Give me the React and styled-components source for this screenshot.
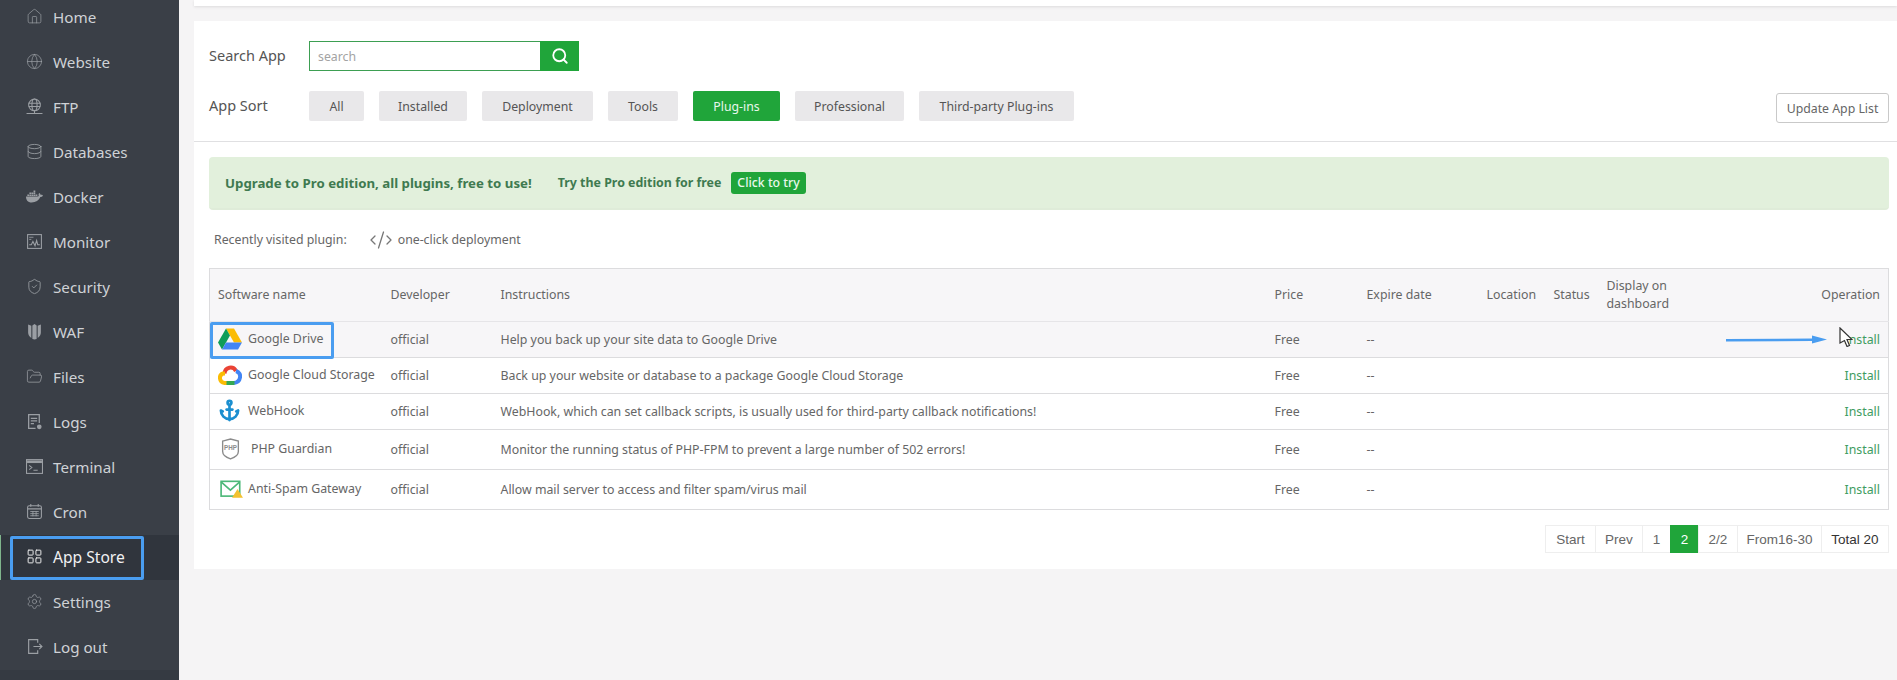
import React from "react";
import styled, { createGlobalStyle } from "styled-components";
import {
  House, Globe, Database, ShieldCheck, FolderOpen, LayoutGrid, Settings, Search, CodeXml, Anchor,
} from "lucide-react";
import { FaDocker } from "react-icons/fa";

const GlobalStyle = createGlobalStyle`
  html, body {
    margin: 0;
    height: 680px;
    overflow: hidden;
    background: #f5f4f5;
    font-family: "Noto Sans", "Open Sans", sans-serif;
  }
  * { box-sizing: border-box; }
`;

const Page = styled.div`
  display: flex;
  width: 1897px;
  height: 680px;
  overflow: hidden;
`;

const Sidebar = styled.nav`
  width: 179px;
  flex: none;
  background: #353a42;
`;

const MenuList = styled.div`
  margin-top: -5px;
  background: #3a3f47;
`;

const MenuItem = styled.div`
  position: relative;
  display: flex;
  align-items: center;
  height: 45px;
  padding: 0 0 2px ${(p) => (p.$active ? 25 : 26)}px;
  gap: 10px;
  font-size: ${(p) => (p.$active ? 15.6 : 15.2)}px;
  color: ${(p) => (p.$active ? "#f0f1f3" : "#cfd2d6")};
  background: ${(p) => (p.$active ? "#30353d" : "transparent")};
  border-left: ${(p) => (p.$active ? "1px solid #7fb48c" : "none")};
  svg {
    width: 17px;
    height: 17px;
    flex: none;
    color: ${(p) => (p.$active ? "#eceded" : "#9b9fa4")};
  }
`;

const HighlightBox = styled.span`
  position: absolute;
  border: 3px solid #4a9df0;
  border-radius: 2px;
  pointer-events: none;
  ${(p) => p.$menu && "left: 9px; top: 1px; width: 134px; height: 44px;"}
  ${(p) => p.$cell && "left: 0; top: 0; width: 124px; height: 37px;"}
`;

const Main = styled.main`
  flex: 1;
  padding-left: 15px;
`;

const TopStrip = styled.div`
  height: 6px;
  background: #fff;
  box-shadow: 0 1px 3px rgba(0, 0, 0, 0.1);
`;

const Panel = styled.section`
  margin-top: 15px;
  background: #fff;
  padding-bottom: 16px;
`;

const FilterArea = styled.div`
  display: flex;
  flex-direction: column;
  gap: 20px;
  padding: 20px 8px 20px 15px;
  border-bottom: 1px solid #e0e0e2;
`;

const FilterRow = styled.div`
  display: flex;
  align-items: center;
  height: 30px;
`;

const FilterLabel = styled.span`
  width: 100px;
  flex: none;
  margin-top: -2px;
  font-size: 14.5px;
  color: #555;
`;

const SearchInput = styled.div`
  width: 231px;
  height: 30px;
  border: 1px solid #3d9f52;
  border-right: none;
  padding-left: 8px;
  display: flex;
  align-items: center;
  font-size: 12.3px;
  color: #a3a3a3;
`;

const SearchButton = styled.div`
  width: 39px;
  height: 30px;
  background: #20a53a;
  display: flex;
  align-items: center;
  justify-content: center;
  color: #fff;
`;

const SortList = styled.div`
  display: flex;
  gap: 15px;
`;

const SortButton = styled.div`
  height: 30px;
  width: ${(p) => p.$w}px;
  display: flex;
  align-items: center;
  justify-content: center;
  border-radius: 2px;
  font-size: 12.3px;
  background: ${(p) => (p.$active ? "#20a53a" : "#e9e8ea")};
  color: ${(p) => (p.$active ? "#e9f7ec" : "#555")};
`;

const UpdateButton = styled.div`
  margin-left: auto;
  margin-top: 4px;
  width: 113px;
  height: 30px;
  display: flex;
  align-items: center;
  justify-content: center;
  border: 1px solid #c9c9c9;
  border-radius: 3px;
  font-size: 12.3px;
  color: #666;
`;

const Content = styled.div`
  padding: 15px 8px 0 15px;
`;

const Banner = styled.div`
  display: flex;
  align-items: center;
  height: 53px;
  padding-left: 16px;
  background: #e2f0dc;
  border-bottom: 2px solid #dfecd9;
  border-radius: 4px;
  font-size: 13.25px;
  font-weight: 700;
  color: #3f7a50;
`;

const BannerOffer = styled.span`
  margin-left: 26px;
  font-size: 12.4px;
`;

const TryButton = styled.span`
  margin-left: 10px;
  height: 22px;
  padding: 0 6px;
  display: flex;
  align-items: center;
  border-radius: 3px;
  background: #20a53a;
  color: #e9f7ec;
  font-size: 12.3px;
  font-weight: 500;
`;

const RecentRow = styled.div`
  display: flex;
  align-items: center;
  height: 58px;
  padding: 1px 0 0 5px;
  font-size: 12.3px;
  color: #666;
`;

const RecentLink = styled.span`
  display: flex;
  align-items: center;
  gap: 5px;
  margin-left: 22px;
  svg {
    color: #777;
  }
`;

const Table = styled.table`
  width: 1680px;
  table-layout: fixed;
  border-collapse: collapse;
  border: 1px solid #dcdcde;
  font-size: 12.35px;
  color: #666;
`;

const HeadCell = styled.th`
  height: 53px;
  padding: 0 8px;
  background: #f7f6f8;
  font-weight: 400;
  line-height: 18px;
  text-align: ${(p) => (p.$right ? "right" : "left")};
  border-bottom: 1px solid #e6e5e8;
`;

const Row = styled.tr`
  height: ${(p) => p.$h}px;
  background: ${(p) => (p.$hover ? "#f7f6f8" : "#fff")};
  border-bottom: 1px solid #dcdcde;
`;

const Cell = styled.td`
  padding: 0 8px;
  white-space: nowrap;
  text-align: ${(p) => (p.$right ? "right" : "left")};
`;

const NameCell = styled.td`
  position: relative;
  padding: 0 0 2px 8px;
  white-space: nowrap;
`;

const NameWrap = styled.div`
  display: flex;
  align-items: center;
  gap: ${(p) => p.$gap}px;
  svg {
    flex: none;
  }
`;

const InstallLink = styled.span`
  color: #3f9d62;
`;

const InstallWrap = styled.span`
  position: relative;
  display: inline-block;
`;

const Arrow = styled.svg`
  position: absolute;
  right: 53px;
  top: 1px;
`;

const Cursor = styled.svg`
  position: absolute;
  left: -6px;
  top: -4px;
`;

const Pager = styled.div`
  display: flex;
  justify-content: flex-end;
  margin-top: 15px;
  font-family: "Liberation Sans", Arial, sans-serif;
  font-size: 13.5px;
`;

const PageCell = styled.span`
  width: ${(p) => p.$w}px;
  height: 28px;
  display: flex;
  align-items: center;
  justify-content: center;
  background: ${(p) => (p.$active ? "#20a53a" : "#fff")};
  color: ${(p) => (p.$active ? "#fff" : p.$dark ? "#333" : "#666")};
  border: 1px solid ${(p) => (p.$active ? "#20a53a" : "#eeeeee")};
  margin-left: -1px;
`;

const MonitorIcon = () => (
  <svg viewBox="0 0 16 16" fill="none" stroke="currentColor" strokeWidth="1">
    <rect x="1.5" y="1.5" width="13" height="13" />
    <path d="M3 11h2l1.5-3 2 4 1.5-5 1 4h2" />
    <path d="M3 4h4M3 6h2" strokeWidth="0.8" />
  </svg>
);

const FtpIcon = () => (
  <svg viewBox="0 0 16 16" fill="none" stroke="currentColor" strokeWidth="1">
    <circle cx="8" cy="6.5" r="5.5" />
    <ellipse cx="8" cy="6.5" rx="2.4" ry="5.5" />
    <path d="M2.6 5h10.8M2.6 8h10.8M8 12v2.5M0.5 14.5h15" />
  </svg>
);

const WafIcon = () => (
  <svg viewBox="0 0 16 16" fill="currentColor">
    <path d="M2 1.5 5 2.6V14C3 12.8 2 11 2 9ZM6 2.4 8 1l2 1.4V15l-2 .6-2-.6ZM11 2.6l3-1.1V9c0 2-1 3.8-3 5Z" />
  </svg>
);

const LogsIcon = () => (
  <svg viewBox="0 0 16 16" fill="none" stroke="currentColor" strokeWidth="1.2">
    <path d="M9 14.5H2.5v-13h10v8" />
    <path d="M4.5 5h6M4.5 7.5h6M4.5 10h3" />
    <circle cx="12.5" cy="13" r="1.6" fill="currentColor" />
  </svg>
);

const TerminalIcon = () => (
  <svg viewBox="0 0 16 16" fill="none" stroke="currentColor" strokeWidth="1">
    <rect x="0.5" y="1.5" width="15" height="13" />
    <path d="M1 3.5h14" strokeWidth="2.5" />
    <path d="M3 7l2.5 2L3 11M7 11.5h4" />
  </svg>
);

const CronIcon = () => (
  <svg viewBox="0 0 16 16" fill="none" stroke="currentColor" strokeWidth="1">
    <rect x="1.5" y="2.5" width="13" height="12" rx="1.5" />
    <path d="M1.5 5.5h13M4.5 1v2.5M11.5 1v2.5" />
    <path d="M4 8h8M4 10h8M4 12h8M6.5 7.5v5M9.5 7.5v5" strokeWidth="0.8" />
  </svg>
);

const LogoutIcon = () => (
  <svg viewBox="0 0 16 16" fill="none" stroke="currentColor" strokeWidth="1.1">
    <path d="M11 4.5V1.5H2.5v13H11v-3" />
    <path d="M7 8h8M12.5 5.5 15 8l-2.5 2.5" />
  </svg>
);

const DriveLogo = () => (
  <svg width="24" height="22" viewBox="0 0 24 21">
    <path d="M8 0h8l8 14h-8Z" fill="#fbbc04" />
    <path d="M8 0 0 14l4 7 8-14Z" fill="#0f9d58" />
    <path d="M8 14h16l-4 7H4Z" fill="#4285f4" />
  </svg>
);

const CloudLogo = () => (
  <svg width="24" height="20" viewBox="0 0 24 20" fill="none" strokeWidth="4">
    <path d="M6.5 8.5C7 2 15 0.5 18 6" stroke="#ea4335" />
    <path d="M18 6c3.5 1 4.5 4 4 6.5-.4 2.5-2.5 5-6 5.5" stroke="#4285f4" />
    <path d="M16.5 18H8" stroke="#34a853" />
    <path d="M8.5 18H6.5C1 17.5 0.5 10 5 8.5L7 8.5" stroke="#fbbc04" />
  </svg>
);

const PhpLogo = () => (
  <svg width="19" height="22" viewBox="0 0 18 21" fill="none" style={{ marginLeft: 3 }}>
    <path d="M1.5 3 9 1l7.5 2v10c0 3-3 5.5-7.5 7-4.5-1.5-7.5-4-7.5-7Z" stroke="#8b8b8b" strokeWidth="1.3" />
    <text x="9" y="11.5" textAnchor="middle" fontSize="6" fontWeight="700" fill="#8b8b8b" fontFamily="Liberation Sans">PHP</text>
  </svg>
);

const MailLogo = () => (
  <svg width="23" height="18" viewBox="0 0 21 16" fill="none" style={{ marginLeft: 2 }}>
    <rect x="1" y="1" width="17" height="13.5" stroke="#4cb878" strokeWidth="1.5" />
    <path d="M1 1.5 9.5 9 18 1.5" stroke="#4cb878" strokeWidth="1.5" />
    <path d="M16 8l5 8H11Z" fill="#f2c230" />
  </svg>
);

const menu = [
  ["Home", <House key="i" strokeWidth={1} />],
  ["Website", <Globe key="i" strokeWidth={1} />],
  ["FTP", <FtpIcon key="i" />],
  ["Databases", <Database key="i" strokeWidth={1.2} />],
  ["Docker", <FaDocker key="i" />],
  ["Monitor", <MonitorIcon key="i" />],
  ["Security", <ShieldCheck key="i" strokeWidth={1.2} />],
  ["WAF", <WafIcon key="i" />],
  ["Files", <FolderOpen key="i" strokeWidth={1.1} />],
  ["Logs", <LogsIcon key="i" />],
  ["Terminal", <TerminalIcon key="i" />],
  ["Cron", <CronIcon key="i" />],
  ["App Store", <LayoutGrid key="i" strokeWidth={1.4} />],
  ["Settings", <Settings key="i" strokeWidth={1} />],
  ["Log out", <LogoutIcon key="i" />],
];

const sorts = [
  ["All", 55],
  ["Installed", 88],
  ["Deployment", 111],
  ["Tools", 70],
  ["Plug-ins", 87],
  ["Professional", 109],
  ["Third-party Plug-ins", 155],
];

const plugins = [
  { name: "Google Drive", logo: <DriveLogo />, gap: 6, h: 36, text: "Help you back up your site data to Google Drive", hover: true },
  { name: "Google Cloud Storage", logo: <CloudLogo />, gap: 6, h: 36, text: "Back up your website or database to a package Google Cloud Storage" },
  { name: "WebHook", logo: <Anchor size={23} strokeWidth={2.8} color="#1b8fd0" />, gap: 7, h: 36, text: "WebHook, which can set callback scripts, is usually used for third-party callback notifications!" },
  { name: "PHP Guardian", logo: <PhpLogo />, gap: 11, h: 40, text: "Monitor the running status of PHP-FPM to prevent a large number of 502 errors!" },
  { name: "Anti-Spam Gateway", logo: <MailLogo />, gap: 5, h: 40, text: "Allow mail server to access and filter spam/virus mail" },
];

const pages = [
  { label: "Start", w: 51 },
  { label: "Prev", w: 48 },
  { label: "1", w: 29 },
  { label: "2", w: 29, active: true },
  { label: "2/2", w: 40 },
  { label: "From16-30", w: 85 },
  { label: "Total 20", w: 68, dark: true },
];

export default function App() {
  return (
    <Page>
      <GlobalStyle />
      <Sidebar>
        <MenuList>
          {menu.map(([label, icon]) => (
            <MenuItem key={label} $active={label === "App Store"}>
              {icon}
              {label}
              {label === "App Store" && <HighlightBox $menu />}
            </MenuItem>
          ))}
        </MenuList>
      </Sidebar>
      <Main>
        <TopStrip />
        <Panel>
          <FilterArea>
            <FilterRow>
              <FilterLabel>Search App</FilterLabel>
              <SearchInput>search</SearchInput>
              <SearchButton>
                <Search size={18} strokeWidth={2.4} />
              </SearchButton>
            </FilterRow>
            <FilterRow>
              <FilterLabel>App Sort</FilterLabel>
              <SortList>
                {sorts.map(([label, w]) => (
                  <SortButton key={label} $w={w} $active={label === "Plug-ins"}>
                    {label}
                  </SortButton>
                ))}
              </SortList>
              <UpdateButton>Update App List</UpdateButton>
            </FilterRow>
          </FilterArea>
          <Content>
            <Banner>
              Upgrade to Pro edition, all plugins, free to use!
              <BannerOffer>Try the Pro edition for free</BannerOffer>
              <TryButton>Click to try</TryButton>
            </Banner>
            <RecentRow>
              Recently visited plugin:
              <RecentLink>
                <CodeXml size={24} strokeWidth={1.3} />
                one-click deployment
              </RecentLink>
            </RecentRow>
            <Table>
              <colgroup>
                <col style={{ width: 173 }} />
                <col style={{ width: 110 }} />
                <col style={{ width: 774 }} />
                <col style={{ width: 92 }} />
                <col style={{ width: 120 }} />
                <col style={{ width: 67 }} />
                <col style={{ width: 53 }} />
                <col style={{ width: 130 }} />
                <col />
              </colgroup>
              <thead>
                <tr>
                  <HeadCell>Software name</HeadCell>
                  <HeadCell>Developer</HeadCell>
                  <HeadCell>Instructions</HeadCell>
                  <HeadCell>Price</HeadCell>
                  <HeadCell>Expire date</HeadCell>
                  <HeadCell>Location</HeadCell>
                  <HeadCell>Status</HeadCell>
                  <HeadCell>Display on dashboard</HeadCell>
                  <HeadCell $right>Operation</HeadCell>
                </tr>
              </thead>
              <tbody>
                {plugins.map((p) => (
                  <Row key={p.name} $h={p.h} $hover={p.hover}>
                    <NameCell>
                      <NameWrap $gap={p.gap}>
                        {p.logo}
                        {p.name}
                      </NameWrap>
                      {p.hover && <HighlightBox $cell />}
                    </NameCell>
                    <Cell>official</Cell>
                    <Cell>{p.text}</Cell>
                    <Cell>Free</Cell>
                    <Cell>--</Cell>
                    <Cell />
                    <Cell />
                    <Cell />
                    <Cell $right>
                      <InstallWrap>
                        <InstallLink>Install</InstallLink>
                        {p.hover && (
                          <>
                            <Arrow width="101" height="16" viewBox="0 0 101 16">
                              <path d="M0 7 86 6.5V3.5L101 7.5 86 11.5V9L0 9.5Z" fill="#4a9df0" />
                            </Arrow>
                            <Cursor width="14" height="20" viewBox="0 0 14 20">
                              <path d="M1 1 13 12.5H8l2.5 6-2.500 1-2.500-6L1 16Z" fill="#fff" stroke="#333" strokeWidth="1.2" />
                            </Cursor>
                          </>
                        )}
                      </InstallWrap>
                    </Cell>
                  </Row>
                ))}
              </tbody>
            </Table>
            <Pager>
              {pages.map((p) => (
                <PageCell key={p.label} $w={p.w} $active={p.active} $dark={p.dark}>
                  {p.label}
                </PageCell>
              ))}
            </Pager>
          </Content>
        </Panel>
      </Main>
    </Page>
  );
}
